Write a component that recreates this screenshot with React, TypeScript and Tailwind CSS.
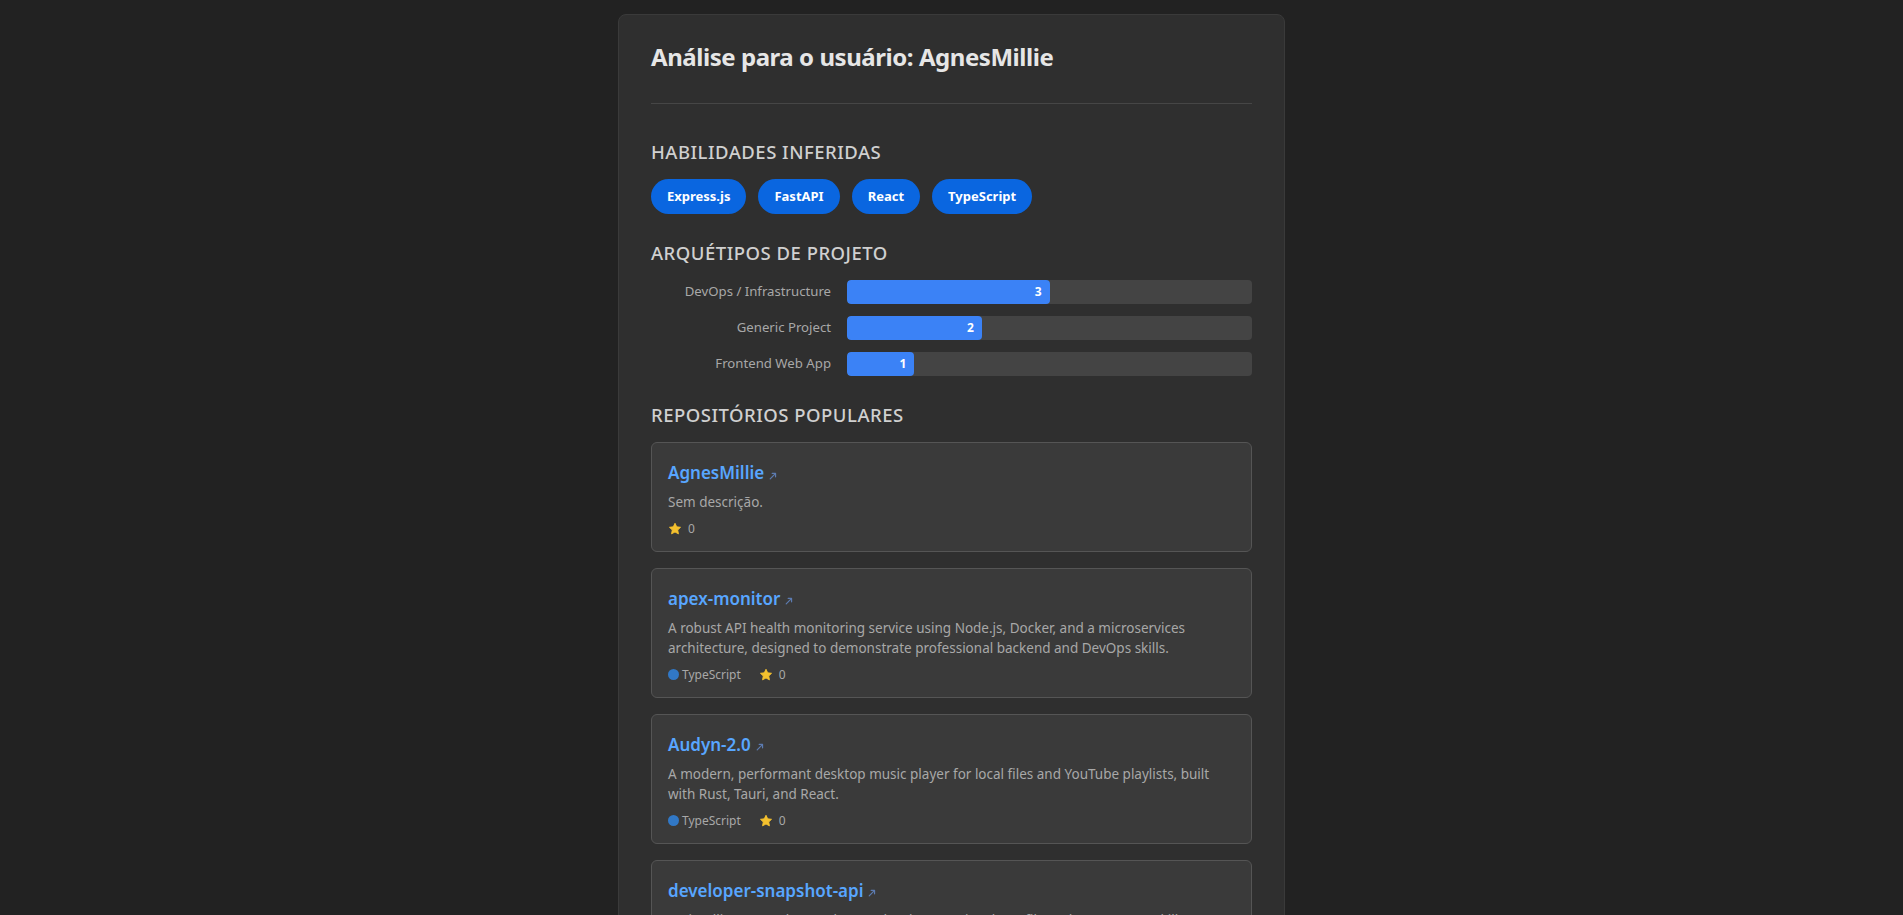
import React from "react";

const skills = ["Express.js", "FastAPI", "React", "TypeScript"];

const archetypes = [
    { name: "DevOps / Infrastructure", count: 3 },
    { name: "Generic Project", count: 2 },
    { name: "Frontend Web App", count: 1 },
];

const repos = [
    { name: "AgnesMillie", description: "Sem descrição.", language: null, stars: 0 },
    {
        name: "apex-monitor",
        description:
            "A robust API health monitoring service using Node.js, Docker, and a microservices architecture, designed to demonstrate professional backend and DevOps skills.",
        language: "TypeScript",
        stars: 0,
    },
    {
        name: "Audyn-2.0",
        description:
            "A modern, performant desktop music player for local files and YouTube playlists, built with Rust, Tauri, and React.",
        language: "TypeScript",
        stars: 0,
    },
    {
        name: "developer-snapshot-api",
        description:
            "An intelligent API that analyzes a developer's GitHub profile and generates a skills snapshot, built with FastAPI and React.",
        language: "TypeScript",
        stars: 0,
    },
];

function Star() {
    return (
        <svg width="14" height="14" viewBox="0 0 24 24" className="shrink-0">
            <path
                d="M12 2.2l2.9 6.1 6.6.8-4.9 4.6 1.3 6.6L12 17.1l-5.9 3.2 1.3-6.6-4.9-4.6 6.6-.8z"
                fill="#f4c12e"
                stroke="#f4c12e"
                strokeWidth="1.6"
                strokeLinejoin="round"
            />
        </svg>
    );
}

function Arrow() {
    return (
        <svg width="8" height="8" viewBox="0 0 10 10" className="ml-[5px] mt-[6px] shrink-0">
            <path d="M1.5 8.5L8 2" stroke="#5c7bb0" strokeWidth="1.5" strokeLinecap="round" />
            <path d="M4 1.8h4.2v4.2" fill="none" stroke="#5c7bb0" strokeWidth="1.5" strokeLinecap="round" strokeLinejoin="round" />
        </svg>
    );
}

export default function App() {
    const total = archetypes.reduce((s, a) => s + a.count, 0);

    return (
        <div className="min-h-screen w-full bg-[#222222] pt-[14px] text-[#e0e0e0] font-['Noto_Sans',sans-serif]">
            <div className="mx-auto w-[667px] rounded-lg border border-[#3a3a3a] bg-[#2f2f2f] px-8 pt-[26px] pb-8">
                <h1 className="border-b border-[#464646] pb-[30px] text-[24px] leading-[32px] font-bold tracking-[-0.45px] text-[#e6e6e6]">
                    Análise para o usuário: AgnesMillie
                </h1>

                <section className="mt-[34px]">
                    <h2 className="mb-[14px] text-[18.5px] leading-[27px] font-medium tracking-[0.5px] text-[#d0d0d0]">
                        HABILIDADES INFERIDAS
                    </h2>
                    <div className="flex flex-wrap gap-3">
                        {skills.map((s) => (
                            <span
                                key={s}
                                className="rounded-full bg-[#0a66e0] px-4 py-[8px] text-[13px] leading-[19px] font-bold text-white"
                            >
                                {s}
                            </span>
                        ))}
                    </div>
                </section>

                <section className="mt-[25px]">
                    <h2 className="mb-[14px] text-[18.5px] leading-[27px] font-medium tracking-[0.5px] text-[#d0d0d0]">
                        ARQUÉTIPOS DE PROJETO
                    </h2>
                    <div className="flex flex-col gap-[12px]">
                        {archetypes.map((a) => (
                            <div key={a.name} className="flex items-center gap-4">
                                <span className="w-[180px] shrink-0 text-right text-[13.2px] text-[#a8a8a8]">{a.name}</span>
                                <div className="h-[24px] flex-1 overflow-hidden rounded-[4px] bg-[#444444]">
                                    <div
                                        className="flex h-full items-center justify-end rounded-[4px] bg-[#3b82f6] pr-[8px] text-[12px] font-bold text-white"
                                        style={{ width: `${(a.count / total) * 100}%` }}
                                    >
                                        {a.count}
                                    </div>
                                </div>
                            </div>
                        ))}
                    </div>
                </section>

                <section className="mt-[25px]">
                    <h2 className="mb-[14px] text-[18.5px] leading-[27px] font-medium tracking-[0.5px] text-[#d0d0d0]">
                        REPOSITÓRIOS POPULARES
                    </h2>
                    <div className="flex flex-col gap-4">
                        {repos.map((r) => (
                            <div key={r.name} className="rounded-md border border-[#555555] bg-[#3a3a3a] px-4 pt-4 pb-[13px]">
                                <div className="flex items-center">
                                    <span className="text-[17px] leading-[27px] font-semibold text-[#58a6ff]">{r.name}</span>
                                    <Arrow />
                                </div>
                                <p className="mt-[6px] text-[13.5px] leading-[20.5px] text-[#a8a8a8]">{r.description}</p>
                                <div className="mt-[7px] flex items-center gap-[18px] text-[12px] leading-[18px] text-[#a8a8a8]">
                                    {r.language && (
                                        <span className="flex items-center gap-[3px]">
                                            <span className="h-[11px] w-[11px] rounded-full bg-[#3178c6]" />
                                            {r.language}
                                        </span>
                                    )}
                                    <span className="flex items-center gap-[6px]">
                                        <Star />
                                        {r.stars}
                                    </span>
                                </div>
                            </div>
                        ))}
                    </div>
                </section>
            </div>
        </div>
    );
}
